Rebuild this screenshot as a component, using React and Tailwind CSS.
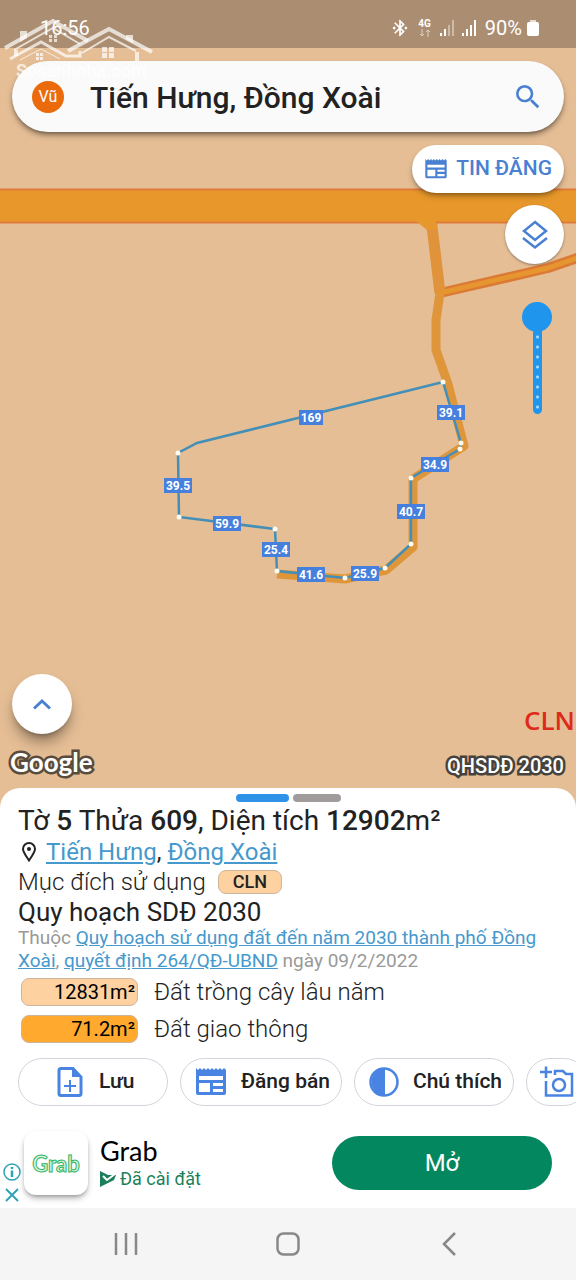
import React from 'react';
import { MdBluetoothConnected, MdSearch } from 'react-icons/md';

const vertices = [
  [443, 382], [461, 443], [460, 449], [411, 478], [411, 544], [385, 568],
  [345, 578], [277, 571], [275, 529], [179, 517], [178, 453],
];

const edgeLabels = [
  { text: '169', x: 311, y: 417, w: 24 },
  { text: '39.1', x: 451, y: 412, w: 28 },
  { text: '34.9', x: 435, y: 464, w: 28 },
  { text: '40.7', x: 411, y: 511, w: 28 },
  { text: '25.9', x: 365, y: 573, w: 28 },
  { text: '41.6', x: 311, y: 574, w: 28 },
  { text: '25.4', x: 276, y: 549, w: 28 },
  { text: '59.9', x: 227, y: 523, w: 28 },
  { text: '39.5', x: 178, y: 485, w: 28 },
];

const landUses = [
  { area: '12831m²', name: 'Đất trồng cây lâu năm', color: 'bg-[#fdd1a0]' },
  { area: '71.2m²', name: 'Đất giao thông', color: 'bg-[#ffa92e]' },
];

const NewsIcon = ({ className }) => (
  <svg viewBox="0 0 32 28" className={className} fill="currentColor" aria-hidden="true">
    <path
      fillRule="evenodd"
      d="M1 0 L3 2 L5 0 L7 2 L9 0 L11 2 L13 0 L15 2 L17 0 L19 2 L21 0 L23 2 L25 0 L27 2 L29 0 L31 2 V25 Q31 27 29 27 H3 Q1 27 1 25 Z M4 8 V12 H28 V8 Z M4 15 V24 H15 V15 Z M18 15 V18 H28 V15 Z M18 21 V24 H28 V21 Z"
    />
  </svg>
);

const SaveIcon = () => (
  <svg viewBox="0 0 26 30" className="h-[30px] w-[26px]" fill="none" stroke="currentColor" strokeWidth="3" aria-hidden="true">
    <path d="M16 1.5 H4 Q2 1.5 2 3.5 V26.5 Q2 28.5 4 28.5 H22 Q24 28.5 24 26.5 V10 Z" />
    <path d="M15 1 L24 10 H15 Z" fill="currentColor" stroke="none" />
    <path d="M13 13 V25 M7 19 H19" strokeWidth="2" />
  </svg>
);

const ContrastIcon = () => (
  <svg viewBox="0 0 30 30" className="size-[30px]" aria-hidden="true">
    <circle cx="15" cy="15" r="13.5" fill="none" stroke="currentColor" strokeWidth="2.5" />
    <path d="M16 1.5 A13.5 13.5 0 0 0 16 28.5 Z" fill="currentColor" />
  </svg>
);

const CameraIcon = () => (
  <svg viewBox="0 0 36 32" className="h-8 w-9" fill="none" stroke="currentColor" strokeWidth="2.5" aria-hidden="true">
    <path d="M7 0.5 V12 M1 6 H13" />
    <path d="M7 15 V29.5 H33 V8 H27 L24 5 H16 V9" />
    <circle cx="20" cy="19" r="6" />
  </svg>
);

const Watermark = () => (
  <svg viewBox="0 0 160 90" className="pointer-events-none absolute top-0 left-0 h-[90px] w-40 text-white/70" fill="currentColor" aria-hidden="true">
    <g fill="none" stroke="currentColor">
      <path d="M5 48 L53 21 L88 41" strokeWidth="4" />
      <path d="M14 50 L53 28 L80 44" strokeWidth="2" />
      <path d="M10 59 L41 42 L66 56 H80 V51" strokeWidth="3" />
      <path d="M20 60 L41 49 L60 59" strokeWidth="1" />
      <path d="M68 51 L109 29 L152 52" strokeWidth="4" />
      <path d="M82 53 L109 37 L136 51" strokeWidth="2" />
      <path d="M137 52 V61 M16 50 V56" strokeWidth="4" />
    </g>
    <path d="M20 31h7v7l-7 4z M126 35h7v8l-7-4z" />
    <path d="M49 35h3v3h-3z M54 35h3v3h-3z M49 39h3v3h-3z M54 39h3v3h-3z M36 53h3v3h-3z M40 53h3v3h-3z M36 57h3v3h-3z M40 57h3v3h-3z" />
    <path d="M102 47h5v5h-5z M109 47h5v5h-5z M102 53h5v5h-5z M109 53h5v5h-5z" />
    <text x="16" y="77" className="text-[18px] font-bold">Sosanhnha.com</text>
  </svg>
);

const StatusBar = () => (
  <header className="relative flex h-12 items-center bg-[#ab8e71] pt-2 pr-9 pl-10 text-white">
    <time className="text-xl">16:56</time>
    <div className="ml-auto flex items-center">
      <MdBluetoothConnected className="size-5" aria-label="Bluetooth" />
      <div className="ml-2 flex flex-col items-center">
        <span className="text-[10px] leading-[10px] font-bold">4G</span>
        <svg viewBox="0 0 12 8" className="h-2 w-3 opacity-60" fill="none" stroke="currentColor" aria-hidden="true">
          <path d="M3 0 V7 M1 5 L3 7 L5 5 M9 8 V1 M7 3 L9 1 L11 3" />
        </svg>
      </div>
      <svg viewBox="0 0 16 16" className="ml-2 size-4" fill="currentColor" aria-hidden="true">
        <path d="M1 13h2v3H1z M5 9h2v7H5z" />
        <path d="M9 5h2v11H9z M13 0h2v16h-2z" opacity="0.4" />
      </svg>
      <svg viewBox="0 0 16 16" className="ml-1.5 size-4" fill="currentColor" aria-hidden="true">
        <path d="M1 13h2v3H1z M5 9h2v7H5z M9 5h2v11H9z M13 0h2v16h-2z" />
      </svg>
      <span className="ml-2 text-xl">90%</span>
      <svg viewBox="0 0 14 16" className="ml-1 h-4 w-3.5" fill="currentColor" aria-hidden="true">
        <path d="M4 0h6v3H4z" opacity="0.7" />
        <rect x="1" y="2" width="12" height="14" rx="2" />
      </svg>
    </div>
  </header>
);

const ParcelMap = () => (
  <svg viewBox="0 0 576 820" preserveAspectRatio="xMidYMin slice" className="absolute inset-0 size-full" aria-label="Bản đồ thửa đất">
    <rect width="576" height="820" fill="#e5be95" />
    {/* roads */}
    <g fill="none" strokeLinejoin="round">
      <path d="M440 293 L548 268 L580 257" stroke="#db7a35" strokeWidth="10" />
      <path d="M431 218 L440 293 L436 320 L436 350 L448 384 L464 446 L413 479 L413 547 L386 570 L345 579 L277 574" stroke="#df963b" strokeWidth="9" />
      <path d="M431 218 L440 293" stroke="#e0933a" strokeWidth="11" />
      <path d="M440 293 L548 268 L580 257" stroke="#e6952f" strokeWidth="5" />
    </g>
    <rect y="189" width="576" height="34" fill="#e8982a" />
    <path d="M0 189.5 H576 M0 222.5 H576" stroke="#df7a3b" strokeWidth="2" />
    <path d="M416 221 L427 230 L437 230 L436 221 Z" fill="#e6972e" />
    {/* parcel outline */}
    <path
      d="M443 382 L461 443 L460 449 L411 478 V544 L385 568 L345 578 L277 571 L275 529 L179 517 L178 453 L197 443 Z"
      fill="none"
      stroke="#438fb8"
      strokeWidth="2.5"
    />
    {vertices.map(([x, y]) => (
      <circle key={`${x}-${y}`} cx={x} cy={y} r="2.5" fill="#fffbee" />
    ))}
    {edgeLabels.map((label) => (
      <g key={label.text}>
        <rect x={label.x - label.w / 2} y={label.y - 7} width={label.w} height="15" fill="#4680dc" />
        <text x={label.x} y={label.y + 5} textAnchor="middle" fill="#fff" className="text-[12px] font-bold">
          {label.text}
        </text>
      </g>
    ))}
    <text x="524" y="730" fill="#dd2a1b" className="font-['Open_Sans'] text-[26px] font-semibold">CLN</text>
  </svg>
);

const chip = 'flex h-12 shrink-0 items-center rounded-full border border-gray-300 bg-white font-medium text-[#222]';

const App = () => {
  return (
    <div className="flex min-h-screen flex-col overflow-x-hidden bg-white font-['Roboto',sans-serif] text-[#222]">
      <main className="relative flex flex-1 flex-col overflow-hidden">
        <ParcelMap />
        <StatusBar />

        <div className="relative flex flex-1 flex-col px-3 pt-[13px] pb-[30px]">
          <div className="flex h-[71px] items-center rounded-full bg-[#fafafa] px-5 shadow-md shadow-black/40">
            <span className="flex size-8 shrink-0 items-center justify-center rounded-full bg-[#ea6a0c] text-base text-white">Vũ</span>
            <input
              type="text"
              aria-label="Tìm kiếm khu vực"
              defaultValue="Tiến Hưng, Đồng Xoài"
              className="ml-[26px] min-w-0 flex-1 bg-transparent pt-0.5 text-[30px] font-medium outline-none"
            />
            <button aria-label="Tìm kiếm" className="text-[#4a80d2]">
              <MdSearch className="size-8" />
            </button>
          </div>

          <div className="mt-[13px] flex flex-col items-end">
            <button className="flex h-12 items-center gap-2 rounded-full bg-white px-3 text-[21px] font-medium text-[#4a80d2] shadow-md shadow-black/30">
              <NewsIcon className="h-5 w-6" />
              TIN ĐĂNG
            </button>
            <button aria-label="Lớp bản đồ" className="mt-3 flex size-[59px] items-center justify-center rounded-full bg-white text-[#4a80d2] shadow shadow-black/30">
              <svg viewBox="0 0 28 30" className="h-[30px] w-7" fill="none" stroke="currentColor" strokeWidth="2.5" aria-hidden="true">
                <path d="M14 2 L25 11 L14 20 L3 11 Z" />
                <path d="M2 18 L14 27.5 L26 18" />
              </svg>
            </button>
            <div className="mt-[38px] mr-3 grid justify-items-center">
              <div className="col-start-1 row-start-1 h-28 w-[9px] rounded-full bg-[#2095ee] bg-[radial-gradient(circle,#a5d8fb_1px,transparent_2px)] bg-[length:9px_10px]" />
              <input
                type="range"
                aria-label="Độ mờ lớp bản đồ"
                defaultValue="100"
                className="col-start-1 row-start-1 h-28 w-[30px] appearance-none bg-transparent [direction:rtl] [writing-mode:vertical-lr] [&::-webkit-slider-thumb]:size-[30px] [&::-webkit-slider-thumb]:appearance-none [&::-webkit-slider-thumb]:rounded-full [&::-webkit-slider-thumb]:bg-[#2095ee]"
              />
            </div>
          </div>

          <button aria-label="Mở rộng" className="mt-auto flex size-[60px] items-center justify-center rounded-full bg-white text-[#4a80d2] shadow-lg shadow-black/40">
            <svg viewBox="0 0 20 12" className="h-3 w-5" fill="none" stroke="currentColor" strokeWidth="3" aria-hidden="true">
              <path d="M2 10.5 L10 3 L18 10.5" />
            </svg>
          </button>
          <div className="mt-3 -ml-0.5 flex items-end justify-between text-white [paint-order:stroke_fill]">
            <span className="font-['Lato'] text-[26px] leading-8 font-bold [-webkit-text-stroke:5px_#5a4c3c]">Google</span>
            <span className="text-xl leading-6 font-medium [-webkit-text-stroke:5px_#46423d]">QHSDĐ 2030</span>
          </div>
        </div>
        <Watermark />
      </main>

      <section className="relative -mt-5 rounded-t-[20px] bg-white pt-1.5">
        <div className="flex justify-center gap-1">
          <span className="h-2 w-[53px] rounded-full bg-[#2e93e8]" />
          <span className="h-2 w-12 rounded-full bg-[#a09c9c]" />
        </div>
        <div className="px-[18px] pt-0.5">
          <h1 className="text-[28px] leading-[34px]">
            Tờ <b className="font-medium">5</b> Thửa <b className="font-medium">609</b>, Diện tích <b className="font-medium">12902</b>m²
          </h1>
          <p className="flex items-center text-2xl leading-7">
            <svg viewBox="0 0 14 20" className="mr-2.5 ml-1 h-5 w-3.5" fill="none" stroke="currentColor" strokeWidth="2" aria-hidden="true">
              <path d="M7 18.5 C4 14 1 10 1 7 A6 6 0 0 1 13 7 C13 10 10 14 7 18.5 Z" />
              <circle cx="7" cy="7" r="2" fill="currentColor" stroke="none" />
            </svg>
            <span>
              <a href="#tien-hung" className="text-[#4599cd] underline">Tiến Hưng</a>, <a href="#dong-xoai" className="text-[#4599cd] underline">Đồng Xoài</a>
            </span>
          </p>
          <p className="flex items-center gap-3 text-2xl leading-8 font-light">
            Mục đích sử dụng
            <span className="rounded-lg border border-[#cdb59b] bg-[#fdd1a0] px-3.5 text-lg leading-[22px] font-medium">CLN</span>
          </p>
          <h2 className="text-[26px] leading-7">Quy hoạch SDĐ 2030</h2>
          <p className="text-[19px] leading-[23px] text-[#999]">
            Thuộc <a href="#quy-hoach" className="text-[#4599cd] underline">Quy hoạch sử dụng đất đến năm 2030 thành phố Đồng Xoài</a>, <a href="#quyet-dinh" className="text-[#4599cd] underline">quyết định 264/QĐ-UBND</a> ngày 09/2/2022
          </p>
          <ul className="mt-1.5 flex flex-col gap-[9px] pl-[3px]">
            {landUses.map((use) => (
              <li key={use.name} className="flex items-center gap-4 text-2xl leading-7 font-light">
                <span className={`w-[117px] rounded-lg border border-[#cdb59b] pr-0.5 text-right text-xl leading-[26px] font-normal text-black ${use.color}`}>
                  {use.area}
                </span>
                {use.name}
              </li>
            ))}
          </ul>
        </div>

        <div className="mt-[15px] flex gap-3 overflow-hidden pl-[18px] text-[21px]">
          <button className={`${chip} w-[150px] gap-4 pl-[38px]`}>
            <span className="text-[#4a84e2]"><SaveIcon /></span>
            Lưu
          </button>
          <button className={`${chip} gap-3.5 pr-[11px] pl-3.5`}>
            <NewsIcon className="h-7 w-8 text-[#4a84e2]" />
            Đăng bán
          </button>
          <button className={`${chip} gap-3.5 pr-[11px] pl-3.5`}>
            <span className="text-[#4a84e2]"><ContrastIcon /></span>
            Chú thích
          </button>
          <button aria-label="Thêm ảnh" className={`${chip} px-3`}>
            <span className="text-[#4a84e2]"><CameraIcon /></span>
          </button>
        </div>
      </section>

      <aside className="flex items-center pt-[25px] pr-6 pb-[13px]">
        <div className="-mb-2 flex w-6 flex-col items-center gap-1.5 self-end text-[#2fa3b5]">
          <button aria-label="Thông tin quảng cáo" className="flex">
            <svg viewBox="0 0 18 18" className="size-[18px]" fill="none" stroke="currentColor" strokeWidth="1.5" aria-hidden="true">
              <circle cx="9" cy="9" r="8" />
              <path d="M9 7.5 V14 M9 4 V6" strokeWidth="2.5" />
            </svg>
          </button>
          <button aria-label="Đóng quảng cáo" className="flex">
            <svg viewBox="0 0 16 16" className="size-4" fill="none" stroke="currentColor" strokeWidth="2" aria-hidden="true">
              <path d="M2 2 L14 14 M14 2 L2 14" />
            </svg>
          </button>
        </div>
        <div className="flex size-16 items-center justify-center rounded-xl bg-white font-['Lato'] text-[22px] font-bold text-[#d9f3e0] shadow-md shadow-black/30 [-webkit-text-stroke:1px_#2fb560]">
          Grab
        </div>
        <div className="ml-3 flex flex-col">
          <span className="font-['Lato'] text-[27px] leading-8 text-black">Grab</span>
          <span className="flex items-center gap-1 text-lg leading-6 text-[#1b7f5c]">
            <svg viewBox="0 0 16 16" className="size-4" aria-hidden="true">
              <path d="M0 0 L8 4 L16 4 L14 9 L0 16 Z" fill="currentColor" />
              <path d="M3 5 L7 9 L15 3" fill="none" stroke="#fff" strokeWidth="2" />
            </svg>
            Đã cài đặt
          </span>
        </div>
        <button className="ml-auto h-[54px] w-[220px] rounded-full bg-[#03875f] text-2xl text-white">Mở</button>
      </aside>

      <nav className="flex h-[72px] items-center justify-between bg-[#f5f5f5] px-28 text-[#888]">
        <button aria-label="Ứng dụng gần đây" className="flex w-7 justify-center">
          <svg viewBox="0 0 24 24" className="size-6" fill="none" stroke="currentColor" strokeWidth="2.5" aria-hidden="true">
            <path d="M2 1 V23 M12 1 V23 M22 1 V23" />
          </svg>
        </button>
        <button aria-label="Màn hình chính" className="flex w-7 justify-center">
          <svg viewBox="0 0 24 24" className="size-6" fill="none" stroke="currentColor" strokeWidth="2.5" aria-hidden="true">
            <rect x="1.5" y="1.5" width="21" height="21" rx="6" />
          </svg>
        </button>
        <button aria-label="Quay lại" className="flex w-7 justify-center">
          <svg viewBox="0 0 24 24" className="size-6" fill="none" stroke="currentColor" strokeWidth="2.5" aria-hidden="true">
            <path d="M17 1 L6 12 L17 23" />
          </svg>
        </button>
      </nav>
    </div>
  );
};

export default App;
